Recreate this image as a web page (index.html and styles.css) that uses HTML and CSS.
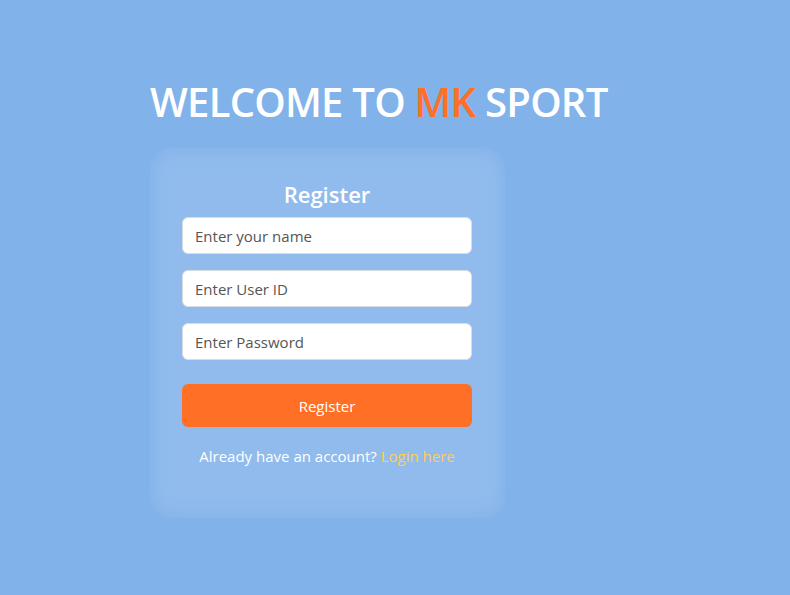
FILE: index.html
```html
<!DOCTYPE html>
<html lang="en">
<head>
<meta charset="utf-8">
<title>MK Sport - Register</title>
<link rel="stylesheet" href="styles.css">
</head>
<body>
<main class="page">
  <h1 class="title">WELCOME TO <span class="brand">MK</span> SPORT</h1>
  <section class="card">
    <h2 class="card-title">Register</h2>
    <form class="form">
      <input class="field" type="text" placeholder="Enter your name">
      <input class="field" type="text" placeholder="Enter User ID">
      <input class="field" type="password" placeholder="Enter Password">
      <button class="btn" type="button">Register</button>
    </form>
    <p class="switch">Already have an account? <a class="link" href="#">Login here</a></p>
  </section>
</main>
</body>
</html>
```
FILE: styles.css
```css
* { box-sizing: border-box; }
html, body { margin: 0; padding: 0; }
body {
  background: #82b2ea;
  min-height: 100vh;
  font-family: "Open Sans", "Noto Sans", sans-serif;
  color: #fff;
}
.page {
  width: 490px;
  margin: 0 auto;
  padding-top: 74px;
}
.title {
  margin: 0;
  font-size: 40px;
  font-weight: 600;
  line-height: 56px;
  letter-spacing: -0.75px;
  color: #fff;
  white-space: nowrap;
}
.brand { color: #ff6f26; }
.card {
  margin-top: 18px;
  width: 355px;
  height: 370px;
  padding: 30px 33px 0 32px;
  border-radius: 22px;
  background: #90bbec;
  box-shadow: inset 0 0 14px 4px #84b3ea;
  text-align: center;
}
.card-title {
  margin: 0 0 7px;
  font-size: 22px;
  font-weight: 600;
  line-height: 32px;
}
.form {
  display: flex;
  flex-direction: column;
  gap: 16px;
}
.field {
  width: 290px;
  height: 37px;
  padding: 0 12px;
  border: 1px solid #d8dde3;
  border-radius: 6px;
  background: #fff;
  font-family: inherit;
  font-size: 15px;
  color: #333;
}
.field::placeholder { color: #555; }
.btn {
  margin-top: 8px;
  width: 290px;
  height: 43px;
  border: 0;
  border-radius: 6px;
  background: #ff6f26;
  color: #fff;
  font-family: inherit;
  font-size: 15px;
}
.switch {
  margin: 18px 0 0;
  font-size: 15px;
  line-height: 22px;
}
.link {
  color: #ffcf4d;
  text-decoration: none;
}
```
